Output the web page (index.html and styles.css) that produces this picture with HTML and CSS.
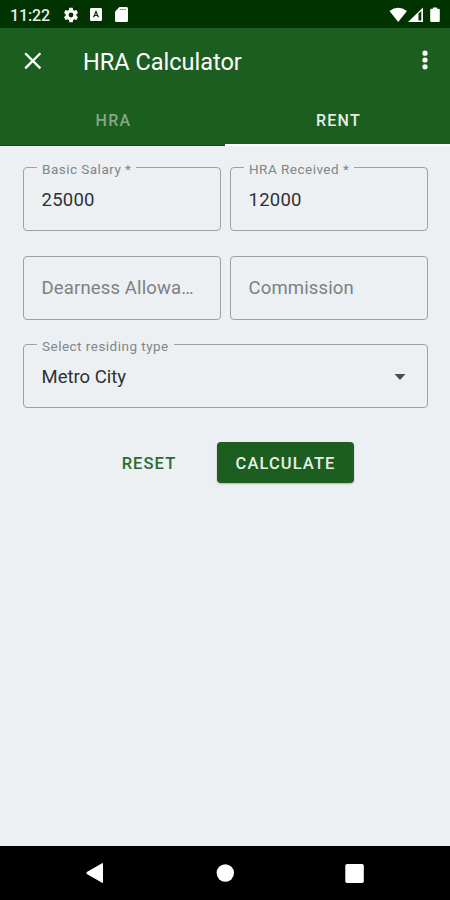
FILE: index.html
```html
<!DOCTYPE html>
<html lang="en">
<head>
    <meta charset="UTF-8">
    <meta name="viewport" content="width=device-width, initial-scale=1.0">
    <title>HRA Calculator</title>
    <link rel="stylesheet" href="styles.css">
</head>
<body>

<div class="status_bar">
    <span class="clock">11:22</span>
    <svg class="gear" width="18" height="18" viewBox="0 0 24 24"><path fill="#fff" fill-rule="evenodd" d="M19.14 12.94c.04-.3.06-.61.06-.94s-.02-.64-.07-.94l2.03-1.58a.49.49 0 0 0 .12-.61l-1.92-3.32a.49.49 0 0 0-.59-.22l-2.39.96a7 7 0 0 0-1.62-.94l-.36-2.54A.48.48 0 0 0 13.92 2.4h-3.84a.48.48 0 0 0-.48.41l-.36 2.54c-.59.24-1.13.57-1.62.94l-2.39-.96a.48.48 0 0 0-.59.22L2.74 8.87a.48.48 0 0 0 .12.61l2.03 1.58c-.05.3-.09.63-.09.94s.02.64.07.94l-2.03 1.58a.49.49 0 0 0-.12.61l1.92 3.32c.12.22.37.29.59.22l2.39-.96c.5.38 1.03.7 1.62.94l.36 2.54c.05.24.24.41.48.41h3.84c.24 0 .44-.17.47-.41l.36-2.54a7 7 0 0 0 1.62-.94l2.39.96c.22.08.47 0 .59-.22l1.92-3.32a.48.48 0 0 0-.12-.61zM12 15.200a3.200 3.200 0 1 1 0-6.400 3.200 3.200 0 0 1 0 6.400z"/></svg>
    <svg class="keyboard" width="12" height="13" viewBox="0 0 12 13"><rect width="12" height="13" rx="1.3" fill="#fff"/><path d="M3.600 9.300L6 3.500l2.400 5.800M4.500 7.500h3" fill="none" stroke="#003300" stroke-width="1.2"/></svg>
    <svg class="sd_card" width="13" height="15" viewBox="0 0 13 15"><path fill="#fff" d="M4.500 0H11.500Q13 0 13 1.500V13.500Q13 15 11.500 15H1.500Q0 15 0 13.500V4.500z"/><path d="M5 2.500h6" stroke="#003300" stroke-width="1.2" stroke-dasharray="1.500 .7" opacity=".65"/></svg>
    <svg class="signals" width="54" height="16" viewBox="0 0 54 16"><path fill="#fff" d="M.5 4Q9 -2.500 18 4L9.200 15z"/><path fill="#fff" fill-rule="evenodd" d="M19 15L34 .5V15zM29.500 6.500V13.500H32.300V4z"/><path fill="#fff" d="M44 1.700V.5h4v1.200h1.500q1.300 0 1.300 1.300v10.700q0 1.300-1.300 1.300h-7q-1.300 0-1.300-1.300V3q0-1.300 1.300-1.300z"/></svg>
</div>

<header class="app_bar">
    <div class="toolbar">
        <svg class="close" width="18" height="18" viewBox="0 0 18 18"><path d="M1.200 1.200l15.200 15.200M16.400 1.200l-15.200 15.200" stroke="#fff" stroke-width="2.300"/></svg>
        <h1 class="title">HRA Calculator</h1>
        <svg class="more" width="6" height="20" viewBox="0 0 6 20"><g fill="#fff"><circle cx="3" cy="3.200" r="2.600"/><circle cx="3" cy="10" r="2.600"/><circle cx="3" cy="16.800" r="2.600"/></g></svg>
    </div>
    <nav class="tabs">
        <div class="tab">HRA</div>
        <div class="tab active">RENT</div>
    </nav>
</header>

<main class="content">
    <div class="fields">
        <fieldset class="field">
            <legend class="label">Basic Salary *</legend>
            <div class="value">25000</div>
        </fieldset>
        <fieldset class="field">
            <legend class="label">HRA Received *</legend>
            <div class="value">12000</div>
        </fieldset>
        <fieldset class="field">
            <div class="value placeholder">Dearness Allowa…</div>
        </fieldset>
        <fieldset class="field">
            <div class="value placeholder">Commission</div>
        </fieldset>
        <fieldset class="field select">
            <legend class="label">Select residing type</legend>
            <div class="value">Metro City</div>
            <svg class="arrow" width="12" height="6" viewBox="0 0 12 6"><path fill="#4b4e50" d="M.5 0h11L6 6z"/></svg>
        </fieldset>
    </div>
    <div class="actions">
        <button class="button reset">RESET</button>
        <button class="button calculate">CALCULATE</button>
    </div>
</main>

<footer class="nav_bar">
    <svg width="18" height="20" viewBox="0 0 18 20"><path fill="#fff" d="M16.500 .5V19.500L1 10.600Q0 10 1 9.400z" stroke="#fff" stroke-linejoin="round"/></svg>
    <svg width="18" height="18" viewBox="0 0 18 18"><circle cx="9.300" cy="9" r="8.700" fill="#fff"/></svg>
    <svg width="19" height="19" viewBox="0 0 19 19"><rect x=".3" width="18.500" height="19" rx="1.800" fill="#fff"/></svg>
</footer>

</body>
</html>
```
FILE: styles.css
```css
* {
    box-sizing: border-box;
}

body {
    margin: 0;
    height: 100vh;
    display: flex;
    flex-direction: column;
    overflow: hidden;
    background: #ECF0F3;
    font-family: Roboto, sans-serif;
    color: #2F3133;
}

svg {
    display: block;
    flex: none;
}

.status_bar {
    height: 28px;
    display: flex;
    align-items: center;
    padding: 1px 7px 0 10px;
    background: #003300;
    color: #E8EEE8;
}

.clock {
    width: 52px;
    padding-top: 1px;
    font-size: 16px;
    font-weight: 500;
    letter-spacing: -0.15px;
}

.keyboard {
    margin-left: 10px;
}

.sd_card {
    margin-left: 13px;
}

.signals {
    margin-left: auto;
}

.app_bar {
    height: 118px;
    display: flex;
    flex-direction: column;
    background: #1B5E20;
    color: #FFFFFF;
}

.toolbar {
    height: 66px;
    display: flex;
    align-items: center;
    padding: 0 22px 0 24px;
}

.close {
    margin-top: -1px;
}

.title {
    flex: 1;
    margin: 2px 0 0 41px;
    font-size: 23.5px;
    font-weight: 400;
}

.more {
    margin-top: -2px;
}

.tabs {
    flex: 1;
    display: flex;
}

.tab {
    flex: 1;
    padding: 17px 0 0 2px;
    text-align: center;
    font-size: 16px;
    line-height: 20px;
    font-weight: 500;
    letter-spacing: 1.3px;
    color: #85AA83;
    border-bottom: 1px solid #0E4A14;
}

.tab.active {
    color: #E4ECE4;
    border-bottom: 2px solid #FFFFFF;
}

.content {
    flex: 1;
    padding: 21px 22px 0 23px;
}

.fields {
    display: grid;
    grid-template-columns: 1fr 1fr;
    gap: 24.5px 9px;
}

.field {
    min-width: 0;
    height: 64px;
    margin: 0;
    padding: 0 17.5px;
    border: 1px solid #9DA1A4;
    border-radius: 4px;
}

.label {
    height: 1px;
    margin-left: -4.5px;
    padding: 0 5px;
    font-size: 13.5px;
    line-height: 4px;
    letter-spacing: 0.48px;
    color: #818588;
}

.value {
    padding-top: 1px;
    font-size: 18.5px;
    line-height: 62px;
    letter-spacing: 0.25px;
    white-space: nowrap;
}

.placeholder {
    padding-top: 0;
    letter-spacing: 0.15px;
    color: #7D8184;
}

.select {
    grid-column: span 2;
    position: relative;
}

.select .value {
    letter-spacing: 0;
}

.arrow {
    position: absolute;
    right: 21px;
    top: 29px;
}

.actions {
    display: flex;
    align-items: center;
    margin-top: 34px;
    padding-left: 81px;
}

.button {
    height: 41px;
    padding: 2px 0 0;
    border: 0;
    border-radius: 4px;
    background: none;
    font-family: inherit;
    font-size: 16.5px;
    font-weight: 500;
    letter-spacing: 1.1px;
}

.reset {
    width: 90px;
    color: #2B6C30;
}

.calculate {
    width: 137px;
    margin-left: 23px;
    background: #1B5E20;
    color: #E8F0E8;
    box-shadow: 0 1px 2px rgba(0, 0, 0, 0.25);
}

.nav_bar {
    height: 54px;
    display: flex;
    align-items: center;
    justify-content: space-between;
    padding: 0 86px;
    background: #000000;
}
```
